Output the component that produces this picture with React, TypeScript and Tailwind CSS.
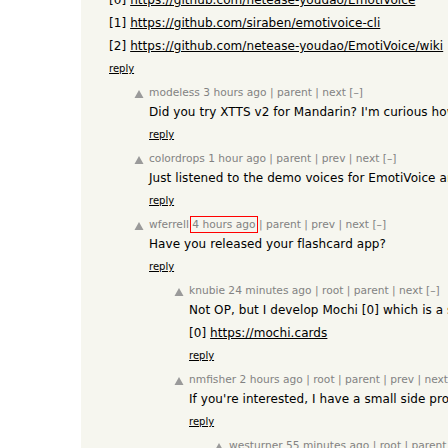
import React from "react";

type Comment = {
  level: number;
  user: string;
  age: string;
  links: string[];
  body: React.ReactNode[];
  boxed?: boolean;
};

const comments: Comment[] = [
  {
    level: 1,
    user: "modeless",
    age: "3 hours ago",
    links: ["parent", "next"],
    body: ["Did you try XTTS v2 for Mandarin? I'm curious how it compares to EmotiVoice."],
  },
  {
    level: 1,
    user: "colordrops",
    age: "1 hour ago",
    links: ["parent", "prev", "next"],
    body: ["Just listened to the demo voices for EmotiVoice and they sound pretty natural."],
  },
  {
    level: 1,
    user: "wferrell",
    age: "4 hours ago",
    links: ["parent", "prev", "next"],
    body: ["Have you released your flashcard app?"],
    boxed: true,
  },
  {
    level: 2,
    user: "knubie",
    age: "24 minutes ago",
    links: ["root", "parent", "next"],
    body: [
      "Not OP, but I develop Mochi [0] which is a spaced repetition flashcard app.",
      <>
        [0]{" "}
        <a href="#" className="underline">
          https://mochi.cards
        </a>
      </>,
    ],
  },
  {
    level: 2,
    user: "nmfisher",
    age: "2 hours ago",
    links: ["root", "parent", "prev", "next"],
    body: ["If you're interested, I have a small side project that does something similar."],
  },
  {
    level: 3,
    user: "westurner",
    age: "55 minutes ago",
    links: ["root", "parent", "prev", "next"],
    body: ["..."],
  },
];

function VoteArrow() {
  return (
    <svg width="10" height="10" viewBox="0 0 10 10" className="shrink-0 mt-[2px]">
      <polygon points="5,1 9.5,9 0.5,9" fill="#9a9a9a" />
    </svg>
  );
}

function Reply() {
  return (
    <div className="h-[22px] leading-[22px] text-[10px]">
      <a href="#" className="underline text-black">
        reply
      </a>
    </div>
  );
}

function CommentRow({ c }: { c: Comment }) {
  return (
    <div className="flex mt-[5px]" style={{ paddingLeft: c.level * 40 }}>
      <div className="w-[28px] shrink-0 flex justify-start pl-[13px] pt-[2px]">
        <VoteArrow />
      </div>
      <div className="flex flex-col">
        <div className="h-[16px] leading-[16px] text-[10.67px] text-[#828282]">
          <a href="#">{c.user}</a>{" "}
          <span className={c.boxed ? "outline outline-1 outline-[#ff0000] outline-offset-[1px]" : ""}>
            {c.age}
          </span>
          {c.links.map((l) => (
            <span key={l}>
              {" | "}
              <a href="#">{l}</a>
            </span>
          ))}{" "}
          [–]
        </div>
        {c.body.map((line, i) => (
          <div key={i} className="h-[23px] leading-[23px] text-[12px] tracking-[0.07px] text-black">
            {line}
          </div>
        ))}
        <Reply />
      </div>
    </div>
  );
}

export default function App() {
  return (
    <div className="flex w-[448px] h-[448px] overflow-hidden bg-white font-['Verdana','DejaVu_Sans',sans-serif] whitespace-nowrap">
      <div className="w-[81px] shrink-0 bg-white" />
      <div className="flex-1 bg-[#f6f6ef] overflow-hidden">
        <div className="-mt-[11px] pl-[28px]">
          {[
            "https://github.com/netease-youdao/EmotiVoice",
            "https://github.com/siraben/emotivoice-cli",
            "https://github.com/netease-youdao/EmotiVoice/wiki",
          ].map((u, i) => (
            <div key={u} className="h-[23px] leading-[23px] text-[12px] tracking-[0.07px] text-black">
              [{i}]{" "}
              <a href="#" className="underline">
                {u}
              </a>
            </div>
          ))}
          <Reply />
        </div>
        {comments.map((c) => (
          <CommentRow key={c.user} c={c} />
        ))}
      </div>
    </div>
  );
}
